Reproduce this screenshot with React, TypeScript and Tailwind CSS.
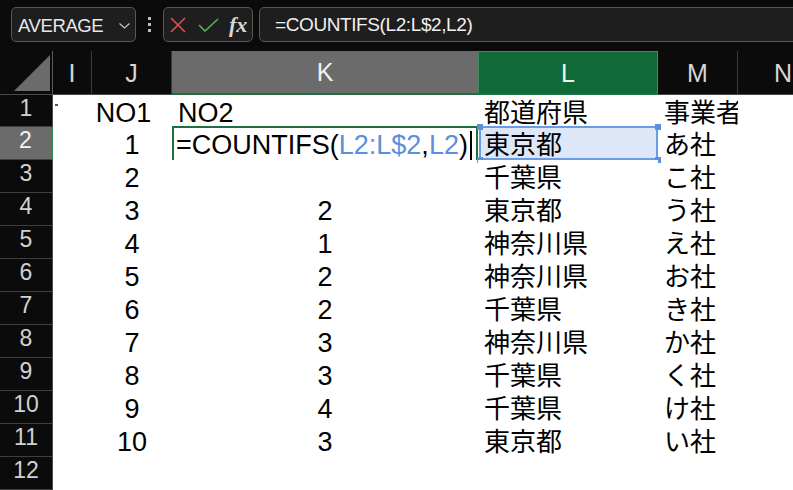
import React from "react";

type Row = { n: number; j: string; k: string; l: string; m: string };

const rows: Row[] = [
  { n: 1, j: "NO1", k: "NO2", l: "都道府県", m: "事業者" },
  { n: 2, j: "1", k: "", l: "東京都", m: "あ社" },
  { n: 3, j: "2", k: "", l: "千葉県", m: "こ社" },
  { n: 4, j: "3", k: "2", l: "東京都", m: "う社" },
  { n: 5, j: "4", k: "1", l: "神奈川県", m: "え社" },
  { n: 6, j: "5", k: "2", l: "神奈川県", m: "お社" },
  { n: 7, j: "6", k: "2", l: "千葉県", m: "き社" },
  { n: 8, j: "7", k: "3", l: "神奈川県", m: "か社" },
  { n: 9, j: "8", k: "3", l: "千葉県", m: "く社" },
  { n: 10, j: "9", k: "4", l: "千葉県", m: "け社" },
  { n: 11, j: "10", k: "3", l: "東京都", m: "い社" },
  { n: 12, j: "", k: "", l: "", m: "" },
];

const Handle = ({ className }: { className: string }) => (
  <span className={`absolute h-[6px] w-[6px] bg-[#5b8fe0] ${className}`} />
);

const FormulaBar = () => (
  <div className="flex h-[51px] items-start pl-[11px] pt-[7px]">
    <div className="flex h-[35px] w-[125px] shrink-0 items-center justify-between rounded-[5px] border border-[#575757] bg-[#1e1e1e] pl-[6px] pr-[5px] pt-[2px]">
      <span className="text-[18.5px] tracking-[-0.4px] text-[#e8e8e8]">AVERAGE</span>
      <svg width="11" height="6" viewBox="0 0 11 6" fill="none" stroke="#c4c4c4" strokeWidth="1.2">
        <polyline points="0.5,0.5 5.5,5 10.5,0.5" />
      </svg>
    </div>
    <div className="flex h-[35px] w-[27px] shrink-0 flex-col items-center justify-center gap-[3px]">
      <span className="h-[3px] w-[3px] bg-[#bdbdbd]" />
      <span className="h-[3px] w-[3px] bg-[#bdbdbd]" />
      <span className="h-[3px] w-[3px] bg-[#bdbdbd]" />
    </div>
    <div className="flex h-[35px] w-[90px] shrink-0 items-center rounded-[5px] border border-[#575757] bg-[#1e1e1e] pl-[6px]">
      <svg width="16" height="16" viewBox="0 0 16 16" stroke="#e0504f" strokeWidth="1.6">
        <line x1="1" y1="1" x2="15" y2="15" />
        <line x1="15" y1="1" x2="1" y2="15" />
      </svg>
      <svg className="ml-[12px]" width="21" height="14" viewBox="0 0 21 14" fill="none" stroke="#4fb35a" strokeWidth="1.6">
        <polyline points="1,7 7,13 20,1" />
      </svg>
      <span className="ml-[10px] font-['Liberation_Serif',serif] text-[22px] font-bold italic text-[#d6d6d6]">fx</span>
    </div>
    <div className="ml-[6px] flex h-[35px] w-[560px] shrink-0 items-center rounded-l-[5px] border border-[#575757] bg-[#1e1e1e] pl-[15px] pt-[2px]">
      <span className="whitespace-nowrap text-[19px] tracking-[-0.4px] text-[#f0f0f0]">=COUNTIFS(L2:L$2,L2)</span>
    </div>
  </div>
);

const ColumnHeaders = () => (
  <>
    <div className="flex items-end justify-end border-r border-b border-r-[#5a5a5a] border-b-[#4a4a4a] pb-[3px] pr-[2px]">
      <svg width="36" height="36" viewBox="0 0 36 36">
        <polygon points="0,36 36,0 36,36" fill="#6b6b6b" />
      </svg>
    </div>
    <div className="flex items-center justify-center border-r border-b border-r-[#3c3c3c] border-b-[#4a4a4a] text-[25px] text-[#d6d6d6]">I</div>
    <div className="flex items-center justify-center border-r border-b border-r-[#3c3c3c] border-b-[#4a4a4a] text-[25px] text-[#d6d6d6]">J</div>
    <div className="flex items-center justify-center border-b-2 border-b-[#1f6e43] bg-[#6b6b6b] text-[25px] text-[#f2f2f2]">K</div>
    <div className="flex items-center justify-center border border-[#3d8a5e] border-b-2 border-b-[#1f6e43] bg-[#0f6a37] text-[25px] text-[#f2f2f2]">L</div>
    <div className="flex items-center justify-center border-r border-b border-r-[#3c3c3c] border-b-[#4a4a4a] text-[25px] text-[#d6d6d6]">M</div>
    <div className="flex items-center justify-start border-b border-b-[#4a4a4a] pl-[36px] text-[25px] text-[#d6d6d6]">N</div>
  </>
);

const SheetRow = ({ r }: { r: Row }) => {
  const active = r.n === 2;
  const head = r.n === 1;
  return (
    <>
      <div
        className={`flex justify-center border-b pt-[2px] text-[23px] leading-[23px] ${
          active
            ? "border-b-[#3f3f3f] border-r-2 border-r-[#2f8a55] bg-[#6b6b6b] text-[#f4f4f4]"
            : "border-r border-b-[#3f3f3f] border-r-[#4a4a4a] bg-[#0b0b0b] text-[#d2d2d2]"
        }`}
      >
        {r.n}
      </div>
      <div className="bg-white pl-[2px] pt-[9px]">
        {head && <span className="block h-[2px] w-[3px] bg-[#555]" />}
      </div>
      <div className={`whitespace-nowrap bg-white text-center ${head ? "pr-[17px]" : ""}`}>{r.j}</div>
      {active ? (
        <div className="relative whitespace-nowrap bg-white pl-[4px]">
          <div className="absolute -top-[1px] left-0 right-0 h-[2px] bg-[#1f6e43]" />
          <div className="absolute -top-[1px] bottom-0 left-0 w-[2px] bg-[#1f6e43]" />
          <div className="absolute -top-[1px] bottom-0 right-0 w-[2px] bg-[#1f6e43]" />
          <span>
            =COUNTIFS(<span className="text-[#5a8fe0]">L2:L$2</span>,<span className="text-[#5a8fe0]">L2</span>)
          </span>
          <span className="ml-[2px] inline-block h-[29px] w-[2px] bg-black align-[-6px]" />
        </div>
      ) : (
        <div className={`whitespace-nowrap bg-white ${head ? "pl-[6px]" : "text-center"}`}>{r.k}</div>
      )}
      <div className="relative whitespace-nowrap bg-white pl-[6px] text-[26px]">
        {active && (
          <>
            <div className="absolute -top-[1px] bottom-0 left-[1px] right-0 border-2 border-[#6a9be6] bg-[#dde7f7]" />
            <Handle className="-top-[3px] -left-[1px]" />
            <Handle className="-top-[3px] -right-[3px]" />
            <Handle className="-bottom-[3px] -left-[1px]" />
            <Handle className="-bottom-[3px] -right-[3px]" />
          </>
        )}
        <span className="relative">{r.l}</span>
      </div>
      <div className="whitespace-nowrap bg-white pl-[6px] text-[26px]">{r.m}</div>
      <div className="bg-white" />
    </>
  );
};

export default function App() {
  return (
    <div className="h-[490px] w-[793px] overflow-hidden bg-[#0b0b0b] font-['Liberation_Sans','Noto_Sans_CJK_JP',sans-serif]">
      <FormulaBar />
      <div className="grid grid-cols-[53px_39px_80px_306px_180px_80px_1fr] grid-rows-[44px_32px_repeat(11,33px)] text-[27px] leading-[36px] text-black">
        <ColumnHeaders />
        {rows.map((r) => (
          <SheetRow key={r.n} r={r} />
        ))}
      </div>
    </div>
  );
}
